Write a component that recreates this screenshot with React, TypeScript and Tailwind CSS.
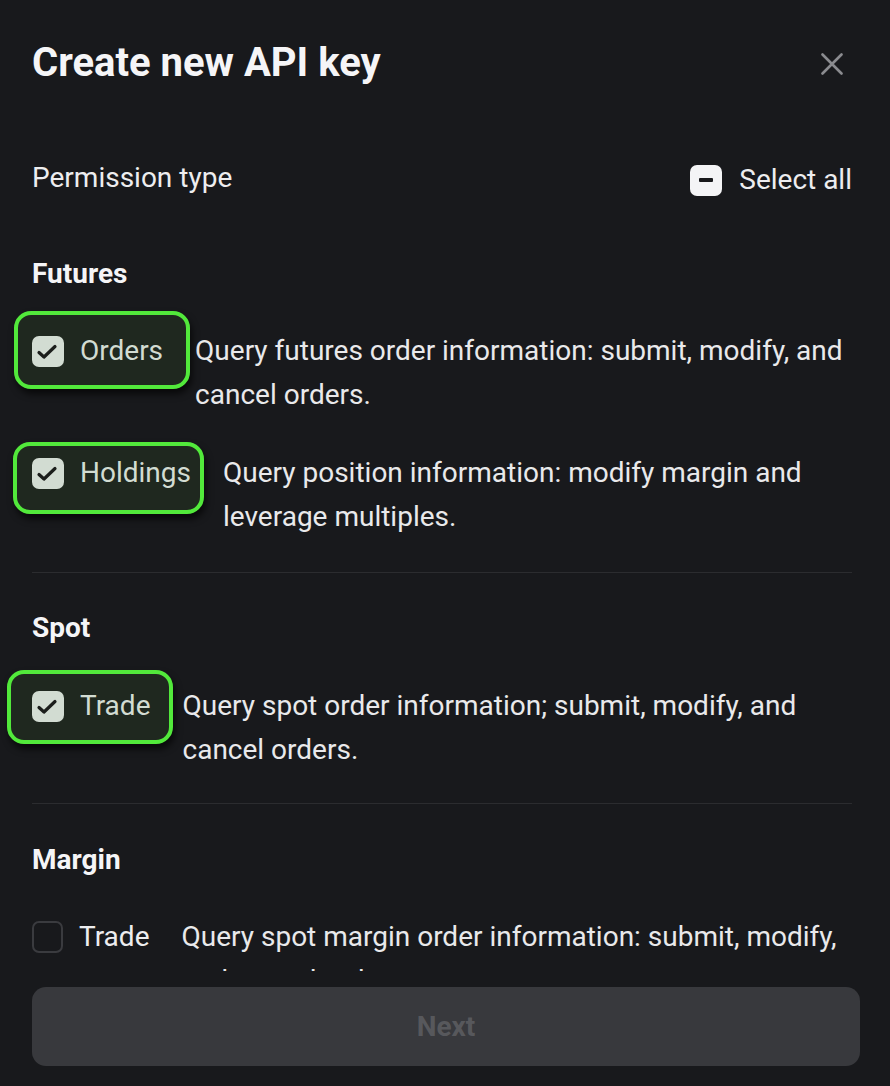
import React from "react";

const CheckIcon = () => (
  <svg width="32" height="31" viewBox="0 0 32 31" fill="none">
    <path d="M7 16.5 L12 21 L23 10.5" stroke="#1b1e1b" strokeWidth="3.2" strokeLinecap="round" strokeLinejoin="round" />
  </svg>
);

type RowProps = {
  label: string;
  desc: string;
  checked: boolean;
  hl?: string;
};

function Row({ label, desc, checked, hl }: RowProps) {
  return (
    <div className="flex items-start gap-8">
      <div className="relative flex h-[44px] shrink-0 items-center gap-4">
        {hl && (
          <div
            className={`absolute rounded-[17px] border-4 border-[#52e93b] bg-[#1f281f] shadow-[2px_5px_7px_rgba(0,0,0,0.65)] ${hl}`}
          />
        )}
        {checked ? (
          <div className="relative flex h-[31px] w-[32px] items-center justify-center rounded-[7px] bg-[#d2dcd2]">
            <CheckIcon />
          </div>
        ) : (
          <div className="relative h-[32px] w-[31px] rounded-[7px] border-2 border-[#3a3b3f]" />
        )}
        <span className={`relative text-[28px] leading-[44px] ${checked ? "text-[#d2dcd2]" : "text-[#ededef]"}`}>
          {label}
        </span>
      </div>
      <p className="text-[28px] leading-[44px] text-[#e9e9eb]">{desc}</p>
    </div>
  );
}

export default function App() {
  return (
    <div className="flex h-[1086px] w-[890px] flex-col overflow-hidden bg-[#18191c] font-[Roboto,'Liberation_Sans',sans-serif]">
      <div className="flex items-center justify-between pl-8 pr-[47px] pt-[39px]">
        <h1 className="text-[40px] font-bold leading-[48px] text-[#f5f5f7]">Create new API key</h1>
        <svg width="22" height="22" viewBox="0 0 22 22" className="mt-[1px]">
          <path d="M1.5 1.5 L20.5 20.5 M20.5 1.5 L1.5 20.5" stroke="#8a8b8f" strokeWidth="2.6" strokeLinecap="round" />
        </svg>
      </div>

      <div className="h-[884px] shrink-0 overflow-hidden pl-8 pr-[38px]">
        <div className="mt-[73px] flex h-[36px] items-center justify-between">
          <span className="text-[28px] leading-[36px] text-[#ededef]">Permission type</span>
          <div className="mt-[4px] flex items-center gap-[17px]">
            <div className="flex h-[31px] w-[32px] items-center justify-center rounded-[7px] bg-[#f4f4f6]">
              <div className="h-[4px] w-[14px] rounded-[1px] bg-[#18191c]" />
            </div>
            <span className="text-[28px] leading-[36px] text-[#ededef]">Select all</span>
          </div>
        </div>

        <h2 className="mt-[60px] text-[28px] font-bold leading-[36px] text-[#f5f5f7]">Futures</h2>
        <div className="mt-[37px]">
          <Row
            label="Orders"
            checked
            desc="Query futures order information: submit, modify, and cancel orders."
            hl="left-[-18px] right-[-27px] top-[-18px] bottom-[-16px]"
          />
        </div>
        <div className="mt-[34px]">
          <Row
            label="Holdings"
            checked
            desc="Query position information: modify margin and leverage multiples."
            hl="left-[-19px] right-[-13px] top-[-9px] bottom-[-19px]"
          />
        </div>
        <div className="mt-[33px] h-px bg-[#2b2c2f]" />

        <h2 className="mt-[37px] text-[28px] font-bold leading-[36px] text-[#f5f5f7]">Spot</h2>
        <div className="mt-[38px]">
          <Row
            label="Trade"
            checked
            desc="Query spot order information; submit, modify, and cancel orders."
            hl="left-[-25px] right-[-22px] top-[-14px] bottom-[-16px]"
          />
        </div>
        <div className="mt-[31px] h-px bg-[#2b2c2f]" />

        <h2 className="mt-[38px] text-[28px] font-bold leading-[36px] text-[#f5f5f7]">Margin</h2>
        <div className="mt-[37px]">
          <Row
            label="Trade"
            checked={false}
            desc="Query spot margin order information: submit, modify, and cancel orders."
          />
        </div>
      </div>

      <div className="mx-8 mt-[16px] flex h-[79px] w-[828px] shrink-0 items-center justify-center rounded-[14px] bg-[#38393d]">
        <span className="text-[28px] font-bold text-[#57585c]">Next</span>
      </div>
    </div>
  );
}
